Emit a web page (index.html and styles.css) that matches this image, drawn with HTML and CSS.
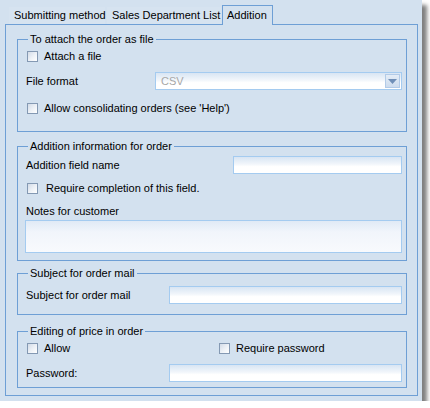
FILE: index.html
```html
<!DOCTYPE html>
<html>
<head>
<meta charset="utf-8">
<link rel="stylesheet" href="styles.css">
</head>
<body>
<div class="window">
  <div class="tabs">
    <div class="tab t1">Submitting method</div>
    <div class="tab t2">Sales Department List</div>
    <div class="tab active">Addition</div>
  </div>
  <div class="panel">
    <fieldset class="group g1">
      <legend>To attach the order as file</legend>
      <div class="check-row r-attach"><label class="check"><span class="cb"></span><span>Attach a file</span></label></div>
      <div class="field-row r-format">
        <span class="lbl w-format">File format</span>
        <div class="select"><span class="sel-text">CSV</span><span class="drop"><svg width="9" height="5" viewBox="0 0 9 5"><path d="M0 0H9L4.5 5Z" fill="#6f8fb8"/></svg></span></div>
      </div>
      <div class="check-row r-consol"><label class="check"><span class="cb"></span><span>Allow consolidating orders (see 'Help')</span></label></div>
    </fieldset>

    <fieldset class="group g2">
      <legend>Addition information for order</legend>
      <div class="field-row r-addname">
        <span class="lbl w-addname">Addition field name</span>
        <div class="input"></div>
      </div>
      <div class="check-row r-require"><label class="check"><span class="cb"></span><span class="tx-wide">Require completion of this field.</span></label></div>
      <div class="notes-label">Notes for customer</div>
      <div class="textarea"></div>
    </fieldset>

    <fieldset class="group g3">
      <legend>Subject for order mail</legend>
      <div class="field-row r-subject">
        <span class="lbl w-subject">Subject for order mail</span>
        <div class="input"></div>
      </div>
    </fieldset>

    <fieldset class="group g4">
      <legend>Editing of price in order</legend>
      <div class="check-row r-allow">
        <label class="check first"><span class="cb"></span><span>Allow</span></label>
        <label class="check"><span class="cb"></span><span>Require password</span></label>
      </div>
      <div class="field-row r-password">
        <span class="lbl w-subject">Password:</span>
        <div class="input"></div>
      </div>
    </fieldset>
  </div>
</div>
</body>
</html>
```

FILE: styles.css
```css
* { box-sizing: border-box; }
html, body { margin: 0; padding: 0; background: #ffffff; }
body {
  font-family: "Liberation Sans", Arial, sans-serif;
  font-size: 11px;
  color: #000;
}
.window {
  width: 422px;
  height: 401px;
  background: #d3e1ef;
  box-shadow: 5px 5px 4px rgba(0, 0, 0, 0.5);
  position: relative;
}
.tabs {
  display: flex;
  align-items: flex-end;
  height: 24px;
  padding-left: 9px;
}
.tab {
  height: 17px;
  line-height: 17px;
  padding: 0 5px;
  background: #d6e3f0;
  white-space: nowrap;
}
.t1 { width: 96px; margin-right: 2px; }
.t2 { width: 114px; padding-left: 5px; margin-right: 1px; }
.tab.active {
  position: relative;
  z-index: 1;
  width: 51px;
  height: 20px;
  line-height: 19px;
  margin-bottom: -1px;
  padding: 0 0 0 4px;
  background: #d3e1ef;
  border: 1px solid #6e9fd5;
  border-bottom: none;
}
.panel {
  margin-left: 5px;
  width: 413px;
  border: 1px solid #6e9fd5;
  padding: 8px 10px 7px 11px;
}
.group {
  margin: 0;
  min-width: 0;
  border: 1px solid #6e9fd5;
  padding: 0 4px 0 8px;
}
.group legend {
  font-size: 11px;
  line-height: 13px;
  height: 13px;
  padding: 0 2px;
  margin-left: 2px;
}
.g1 { padding-bottom: 13px; }
.g2 { margin-top: 8px; padding-bottom: 7px; }
.g3 { margin-top: 6px; padding-bottom: 10px; }
.g4 { margin-top: 10px; padding-bottom: 5px; }

.check-row {
  display: flex;
  align-items: center;
  height: 20px;
}
.check {
  display: flex;
  align-items: center;
  gap: 6px;
  padding-left: 1px;
}
.check.first { width: 192px; }
.cb {
  width: 11px;
  height: 11px;
  border: 1px solid #8499b3;
  background: linear-gradient(135deg, #d3dce8 0%, #eef2f7 55%, #ffffff 100%);
  flex: none;
}
.tx-wide { margin-left: 2px; }
.r-consol { margin-top: 8px; }
.r-require { margin-top: 4px; }
.r-allow { margin-top: 0; }

.field-row {
  display: flex;
  align-items: center;
  height: 18px;
}
.r-format { margin-top: 6px; }
.r-addname { margin-top: 3px; }
.r-subject { margin-top: 6px; }
.r-password { margin-top: 6px; }
.lbl { flex: none; white-space: nowrap; }
.w-format { width: 129px; }
.w-addname { width: 207px; }
.w-subject { width: 143px; }

.input, .select {
  flex: 1;
  height: 18px;
  border: 1px solid #a4cbf0;
  background: linear-gradient(to bottom, #d8e5f3 0%, #f2f6fb 45%, #ffffff 60%, #ffffff 100%);
}
.select {
  display: flex;
  align-items: center;
  justify-content: space-between;
  padding: 0 1px 0 5px;
}
.sel-text { color: #a7a7a7; }
.drop {
  width: 15px;
  height: 14px;
  border: 1px solid #b2cbe8;
  background: linear-gradient(to bottom, #e4edf7, #cddcee);
  display: flex;
  align-items: center;
  justify-content: center;
}
.drop svg { display: block; }
.notes-label {
  margin-top: 6px;
  height: 14px;
  line-height: 14px;
}
.textarea {
  margin-top: 2px;
  height: 33px;
  border: 1px solid #a4cbf0;
  margin-left: -1px;
  background: linear-gradient(to bottom, #e0eaf6 0%, #f1f5fb 35%, #f8fafd 100%);
}
```
